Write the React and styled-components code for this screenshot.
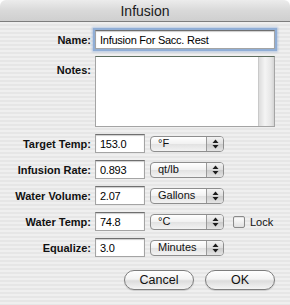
import React from 'react';
import styled, { createGlobalStyle } from 'styled-components';

const GlobalStyle = createGlobalStyle`
  html, body {
    margin: 0;
    padding: 0;
    background: #ffffff;
  }
  body {
    font-family: 'Liberation Sans', Arial, sans-serif;
  }
`;

const rows = [
  { label: 'Target Temp:', value: '153.0', unit: '°F' },
  { label: 'Infusion Rate:', value: '0.893', unit: 'qt/lb' },
  { label: 'Water Volume:', value: '2.07', unit: 'Gallons' },
  { label: 'Water Temp:', value: '74.8', unit: '°C', lock: true },
  { label: 'Equalize:', value: '3.0', unit: 'Minutes' },
];

function Arrows() {
  return (
    <svg width="7" height="10" viewBox="0 0 7 10">
      <path d="M3.5 0.5 L6.5 4 L0.5 4 Z" fill="#1c1c1c" />
      <path d="M3.5 9.5 L6.5 6 L0.5 6 Z" fill="#1c1c1c" />
    </svg>
  );
}

export default function App() {
  return (
    <>
      <GlobalStyle />
      <Window>
        <TitleBar>Infusion</TitleBar>
        <Body>
          <Form>
            <Label>Name:</Label>
            <Field $wide $focused value="Infusion For Sacc. Rest" readOnly />

            <Label $top>Notes:</Label>
            <Notes>
              <NotesText />
              <Scrollbar />
            </Notes>

            {rows.map((row) => (
              <React.Fragment key={row.label}>
                <Label>{row.label}</Label>
                <Controls>
                  <Field value={row.value} readOnly />
                  <Popup>
                    <PopupText>{row.unit}</PopupText>
                    <PopupArrows>
                      <Arrows />
                    </PopupArrows>
                  </Popup>
                  {row.lock && (
                    <CheckLabel>
                      <Checkbox />
                      Lock
                    </CheckLabel>
                  )}
                </Controls>
              </React.Fragment>
            ))}
          </Form>
          <Buttons>
            <PushButton>Cancel</PushButton>
            <PushButton>OK</PushButton>
          </Buttons>
        </Body>
      </Window>
    </>
  );
}

const Window = styled.div`
  width: 290px;
  height: 305px;
  display: flex;
  flex-direction: column;
  overflow: hidden;
`;

const TitleBar = styled.div`
  height: 21px;
  flex-shrink: 0;
  display: flex;
  align-items: center;
  justify-content: center;
  font-size: 14px;
  color: #1a1a1a;
  border-radius: 6px 6px 0 0;
  border-bottom: 1px solid #7d7d7d;
  background: linear-gradient(#ececec, #d9d9d9 50%, #cfcfcf);
`;

const Body = styled.div`
  flex: 1;
  display: flex;
  flex-direction: column;
  padding: 8px 15px 0 0;
  background: repeating-linear-gradient(
    #efefef 0px,
    #efefef 2px,
    #e6e6e6 2px,
    #e6e6e6 4px
  );
`;

const Form = styled.div`
  display: grid;
  grid-template-columns: 91px 1fr;
  column-gap: 4px;
  row-gap: 7px;
  align-items: center;
`;

const Label = styled.div`
  text-align: right;
  font-size: 11px;
  font-weight: bold;
  color: #111;
  align-self: ${(p) => (p.$top ? 'start' : 'center')};
  padding-top: ${(p) => (p.$top ? '8px' : '0')};
`;

const Field = styled.input`
  box-sizing: border-box;
  width: ${(p) => (p.$wide ? '180px' : '50px')};
  height: 19px;
  margin: 0;
  padding: 0 0 0 4px;
  font-family: 'Liberation Sans', Arial, sans-serif;
  font-size: 11px;
  letter-spacing: -0.25px;
  color: #000;
  background: #fff;
  border: 1px solid #a4a4a4;
  border-top-color: #6f6f6f;
  outline: none;
  box-shadow: ${(p) =>
    p.$focused
      ? '0 0 0 2px #90aed6, 0 0 2px 3px rgba(110,150,210,0.45), inset 0 1px 1px rgba(0,0,0,0.2)'
      : 'inset 0 1px 1px rgba(0,0,0,0.2)'};
`;

const Notes = styled.div`
  box-sizing: border-box;
  width: 180px;
  height: 71px;
  display: flex;
  background: #fff;
  border: 1px solid #a4a4a4;
  border-top-color: #5d6d5d;
`;

const NotesText = styled.div`
  flex: 1;
`;

const Scrollbar = styled.div`
  width: 15px;
  border-left: 1px solid #c9c9c9;
  background: linear-gradient(90deg, #dcdcdc, #f4f4f4 40%, #e6e6e6 80%, #d4d4d4);
`;

const Controls = styled.div`
  display: flex;
  align-items: center;
`;

const Popup = styled.div`
  box-sizing: border-box;
  margin-left: 5px;
  width: 74px;
  height: 16px;
  display: flex;
  border: 1px solid #8e8e8e;
  border-radius: 4px;
  overflow: hidden;
  background: linear-gradient(#ffffff, #f1f1f1 50%, #e2e2e2 51%, #f3f3f3);
`;

const PopupText = styled.div`
  flex: 1;
  padding-left: 7px;
  font-size: 11px;
  line-height: 13px;
  color: #111;
`;

const PopupArrows = styled.div`
  width: 16px;
  display: flex;
  align-items: center;
  justify-content: center;
  border-left: 1px solid #9a9a9a;
  background: linear-gradient(#f2f2f2, #dedede 50%, #cbcbcb 51%, #e4e4e4);
`;

const CheckLabel = styled.label`
  display: flex;
  align-items: center;
  margin-left: 9px;
  gap: 5px;
  font-size: 11px;
  color: #111;
`;

const Checkbox = styled.span`
  box-sizing: border-box;
  width: 12px;
  height: 12px;
  border: 1px solid #8a8a8a;
  border-radius: 2px;
  background: linear-gradient(#ffffff, #f0f0f0 50%, #e0e0e0);
  box-shadow: inset 0 1px 1px rgba(0, 0, 0, 0.12);
`;

const Buttons = styled.div`
  display: flex;
  justify-content: flex-end;
  gap: 11px;
  margin-top: 13px;
`;

const PushButton = styled.div`
  box-sizing: border-box;
  width: 70px;
  height: 20px;
  display: flex;
  align-items: center;
  justify-content: center;
  font-size: 12.5px;
  color: #111;
  border: 1px solid #7d7d7d;
  border-radius: 10px;
  background: linear-gradient(#ffffff, #f3f3f3 45%, #dcdcdc 55%, #f4f4f4);
  box-shadow: 0 1px 1px rgba(0, 0, 0, 0.15);
`;
